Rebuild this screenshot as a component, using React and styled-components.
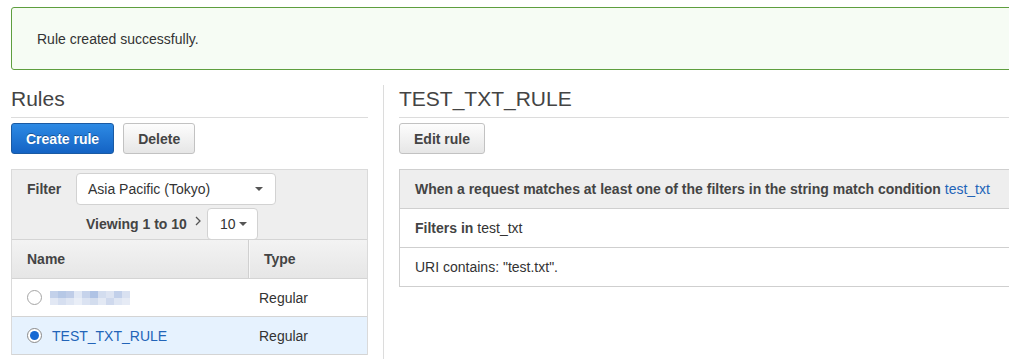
import React from 'react';
import styled, { createGlobalStyle } from 'styled-components';

const GlobalStyle = createGlobalStyle`
  body {
    margin: 0;
    background: #fff;
    font-family: "Liberation Sans", Arial, sans-serif;
    font-size: 14px;
    color: #333;
    overflow: hidden;
  }
`;

const Page = styled.div`
  width: 1080px;
  padding: 7px 0 0 11px;
`;

const Alert = styled.div`
  height: 61px;
  display: flex;
  align-items: center;
  padding-left: 25px;
  border: 1px solid #5e9e3e;
  border-radius: 3px;
  background: #f6fcf4;
  color: #333;
`;

const Columns = styled.div`
  display: flex;
  margin-top: 14px;
  min-height: 300px;
`;

const LeftCol = styled.div`
  width: 357px;
  flex: none;
`;

const Divider = styled.div`
  width: 1px;
  flex: none;
  margin: 1px 15px 0;
  background: #dcdcdc;
`;

const RightCol = styled.div`
  width: 640px;
  flex: none;
`;

const Heading = styled.h2`
  margin: 0;
  padding-bottom: 3px;
  font-size: 21px;
  font-weight: normal;
  line-height: 30px;
  color: #444;
  border-bottom: 1px solid #dcdcdc;
`;

const ButtonRow = styled.div`
  display: flex;
  gap: 9px;
  margin-top: 5px;
`;

const Button = styled.button`
  height: 31px;
  padding: 0 14px;
  border-radius: 3px;
  font-family: inherit;
  font-size: 14px;
  font-weight: bold;
  cursor: pointer;
  border: 1px solid ${(p) => (p.$primary ? '#1a5aa3' : '#c2c2c2')};
  color: ${(p) => (p.$primary ? '#fff' : '#444')};
  background: ${(p) =>
    p.$primary
      ? 'linear-gradient(#2d8ae4, #1463c4)'
      : 'linear-gradient(#fdfdfd, #e6e6e6)'};
  text-shadow: ${(p) => (p.$primary ? '0 -1px 0 rgba(0,0,0,0.35)' : 'none')};
`;

const Panel = styled.div`
  margin-top: 15px;
  border: 1px solid #dadada;
  border-bottom: none;
  background: #eeeeee;
`;

const FilterArea = styled.div`
  padding: 3px 15px 0;
`;

const FilterRow = styled.div`
  display: flex;
  align-items: center;
`;

const Label = styled.span`
  width: 49px;
  font-weight: bold;
  color: #444;
`;

const Select = styled.div`
  box-sizing: border-box;
  width: ${(p) => p.$width}px;
  height: 32px;
  display: flex;
  align-items: center;
  justify-content: space-between;
  padding: 0 ${(p) => p.$right}px 0 ${(p) => p.$left}px;
  background: #fff;
  border: 1px solid #d2d2d2;
  border-radius: 4px;
  color: #333;
`;

const Caret = styled.span`
  width: 0;
  height: 0;
  border-left: 4px solid transparent;
  border-right: 4px solid transparent;
  border-top: 4px solid #555;
`;

const ViewRow = styled.div`
  display: flex;
  align-items: center;
  margin: 3px 0 -1px 59px;
`;

const Viewing = styled.span`
  font-weight: bold;
  color: #444;
`;

const Chevron = styled.svg`
  margin: 0 6px 0 8px;
  position: relative;
  top: -3px;
`;

const Table = styled.div`
  position: relative;
`;

const TableRow = styled.div`
  box-sizing: border-box;
  display: grid;
  grid-template-columns: 237px 1fr;
  height: ${(p) => (p.$head ? 39 : 38)}px;
  border-top: 1px solid #d4d4d4;
  background: ${(p) =>
    p.$head ? 'linear-gradient(#f3f3f3, #e6e6e6)' : p.$selected ? '#e6f2fe' : '#fff'};
  font-weight: ${(p) => (p.$head ? 'bold' : 'normal')};
  color: ${(p) => (p.$head ? '#444' : '#333')};
  &:last-child {
    height: 39px;
    border-bottom: 1px solid #d4d4d4;
  }
`;

const Cell = styled.div`
  display: flex;
  align-items: center;
  gap: ${(p) => (p.$gap ? p.$gap : 0)}px;
  padding-left: ${(p) => p.$pad}px;
  border-right: ${(p) => (p.$split ? '1px solid #d0d0d0' : 'none')};
  box-shadow: ${(p) => (p.$split ? '1px 0 0 #f7f7f7' : 'none')};
`;

const Radio = styled.span`
  box-sizing: border-box;
  width: 15px;
  height: 15px;
  flex: none;
  border-radius: 50%;
  border: 1px solid ${(p) => (p.$checked ? '#8a8a8a' : '#a5a5a5')};
  background: #fff;
  display: flex;
  align-items: center;
  justify-content: center;
  &::after {
    content: '';
    width: 9px;
    height: 9px;
    border-radius: 50%;
    background: ${(p) => (p.$checked ? '#1669d3' : 'transparent')};
  }
`;

const Link = styled.span`
  color: #2264b8;
  font-weight: normal;
`;

const Box = styled.div`
  margin-top: 15px;
  border: 1px solid #cfcfcf;
`;

const BoxRow = styled.div`
  height: 38px;
  display: flex;
  align-items: center;
  padding-left: 15px;
  background: ${(p) => (p.$head ? '#eeeeee' : '#fff')};
  font-weight: ${(p) => (p.$head ? 'bold' : 'normal')};
  color: ${(p) => (p.$head ? '#444' : '#333')};
  & + & {
    border-top: 1px solid #cfcfcf;
  }
`;

const Strong = styled.b`
  color: #444;
  margin-right: 4px;
`;

// pixelated redaction of the first rule name
const blurTop = ['#c3d1ea', '#b6c8e6', '#bfcde8', '#e1e8f5', '#c6d3eb', '#afc3e5', '#d3ddef', '#dde4f2', '#c2d0ea', '#d9e1f1'];
const blurBottom = ['#e2e8f4', '#d6dff0', '#dfe6f3', '#e9eef7', '#dbe3f2', '#d3ddee', '#e3e9f4', '#cfd9ed', '#dfe6f3', '#e6ebf5'];

const Blurred = () => (
  <svg width="80" height="14" viewBox="0 0 80 14">
    {blurTop.map((c, i) => (
      <rect key={'t' + i} x={i * 8} y="0" width="8" height="7" fill={c} />
    ))}
    {blurBottom.map((c, i) => (
      <rect key={'b' + i} x={i * 8} y="7" width="8" height="7" fill={c} />
    ))}
  </svg>
);

const App = () => {
  return (
    <Page>
      <GlobalStyle />
      <Alert>Rule created successfully.</Alert>
      <Columns>
        <LeftCol>
          <Heading>Rules</Heading>
          <ButtonRow>
            <Button $primary>Create rule</Button>
            <Button>Delete</Button>
          </ButtonRow>
          <Panel>
            <FilterArea>
              <FilterRow>
                <Label>Filter</Label>
                <Select $width={200} $left={11} $right={12}>
                  Asia Pacific (Tokyo)
                  <Caret />
                </Select>
              </FilterRow>
              <ViewRow>
                <Viewing>Viewing 1 to 10</Viewing>
                <Chevron width="6" height="10" viewBox="0 0 6 10">
                  <polyline points="1,1 5,5 1,9" fill="none" stroke="#555" strokeWidth="1.3" />
                </Chevron>
                <Select $width={51} $left={12} $right={10}>
                  10
                  <Caret />
                </Select>
              </ViewRow>
            </FilterArea>
            <Table>
              <TableRow $head>
                <Cell $pad={15} $split>Name</Cell>
                <Cell $pad={15}>Type</Cell>
              </TableRow>
              <TableRow>
                <Cell $pad={15} $gap={8}>
                  <Radio />
                  <Blurred />
                </Cell>
                <Cell $pad={10}>Regular</Cell>
              </TableRow>
              <TableRow $selected>
                <Cell $pad={15} $gap={10}>
                  <Radio $checked />
                  <Link>TEST_TXT_RULE</Link>
                </Cell>
                <Cell $pad={10}>Regular</Cell>
              </TableRow>
            </Table>
          </Panel>
        </LeftCol>
        <Divider />
        <RightCol>
          <Heading>TEST_TXT_RULE</Heading>
          <ButtonRow>
            <Button>Edit rule</Button>
          </ButtonRow>
          <Box>
            <BoxRow $head>
              When a request matches at least one of the filters in the string match condition&nbsp;
              <Link>test_txt</Link>
            </BoxRow>
            <BoxRow>
              <Strong>Filters in</Strong>test_txt
            </BoxRow>
            <BoxRow>URI contains: "test.txt".</BoxRow>
          </Box>
        </RightCol>
      </Columns>
    </Page>
  );
};

export default App;
